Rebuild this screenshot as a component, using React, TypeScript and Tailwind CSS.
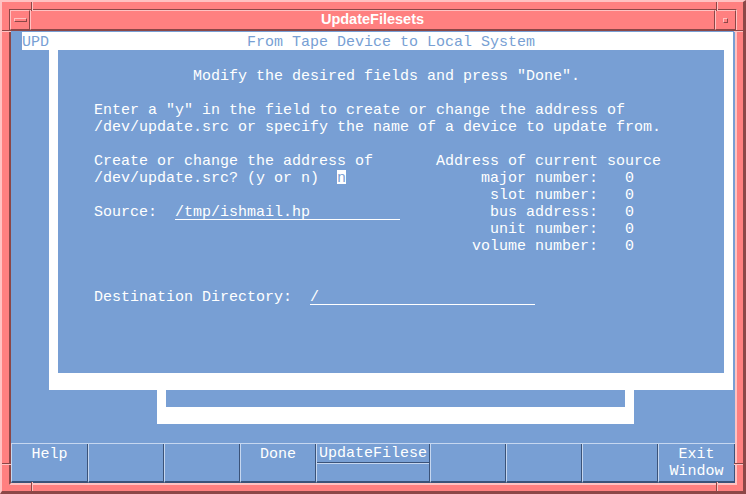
import React from "react";

const Line = ({ children }: { children?: React.ReactNode }) => (
  <div className="h-[17px] leading-[20px] whitespace-pre">{children}</div>
);

const Field = ({ text }: { text: string }) => (
  <span className="inline-block w-[225px] h-[17px] align-top border-b border-white">{text}</span>
);

const Btn = ({ w, lines, split }: { w: string; lines: string[]; split?: boolean }) => (
  <div
    className={`${w} h-full flex flex-col border-l border-l-[#c6d7f0] border-r border-r-[#3b5379] border-b-2 border-b-[#3b5379] text-white text-center`}
  >
    {split ? (
      <>
        <div className="h-[19px] border-b border-b-[#3b5379]">
          <div className="h-[17px] leading-[20px] whitespace-pre">{lines[0]}</div>
        </div>
        <div className="flex-1 border-t border-t-[#c6d7f0]" />
      </>
    ) : (
      <div className="pt-px">
        {lines.map((l, i) => (
          <div key={i} className="h-[17px] leading-[20px] whitespace-pre">
            {l}
          </div>
        ))}
      </div>
    )}
  </div>
);

export default function App() {
  return (
    <div className="w-[746px] h-[494px] relative overflow-hidden bg-[#ff8080] border-t-2 border-l-2 border-r-[3px] border-b-[3px] border-t-[#ffc2c2] border-l-[#ffc2c2] border-r-[#8c4747] border-b-[#8c4747] pl-[7px] pt-[7px] pr-[6px] pb-[6px]">
      {/* frame corner separators */}
      <div className="absolute left-[29px] top-0 w-px h-[9px] bg-[#8c4747]" />
      <div className="absolute left-[30px] top-0 w-px h-[9px] bg-[#ffc2c2]" />
      <div className="absolute left-[714px] top-0 w-px h-[9px] bg-[#8c4747]" />
      <div className="absolute left-[715px] top-0 w-px h-[9px] bg-[#ffc2c2]" />
      <div className="absolute left-[29px] bottom-0 w-px h-[9px] bg-[#8c4747]" />
      <div className="absolute left-[30px] bottom-0 w-px h-[9px] bg-[#ffc2c2]" />
      <div className="absolute left-[714px] bottom-0 w-px h-[9px] bg-[#8c4747]" />
      <div className="absolute left-[715px] bottom-0 w-px h-[9px] bg-[#ffc2c2]" />
      <div className="absolute left-0 top-[28px] w-[9px] h-px bg-[#8c4747]" />
      <div className="absolute left-0 top-[29px] w-[9px] h-px bg-[#ffc2c2]" />
      <div className="absolute right-0 top-[28px] w-[9px] h-px bg-[#8c4747]" />
      <div className="absolute right-0 top-[29px] w-[9px] h-px bg-[#ffc2c2]" />
      <div className="absolute left-0 top-[461px] w-[9px] h-px bg-[#8c4747]" />
      <div className="absolute left-0 top-[462px] w-[9px] h-px bg-[#ffc2c2]" />
      <div className="absolute right-0 top-[461px] w-[9px] h-px bg-[#8c4747]" />
      <div className="absolute right-0 top-[462px] w-[9px] h-px bg-[#ffc2c2]" />

      <div className="w-full h-full flex flex-col border border-t-[#8c4747] border-l-[#8c4747] border-r-[#ffc2c2] border-b-[#ffc2c2]">
        {/* title bar */}
        <div className="flex h-[20px] shrink-0">
          <div className="w-[20px] h-full border border-t-[#ffc2c2] border-l-[#ffc2c2] border-r-[#8c4747] border-b-[#8c4747] pl-[3px] pt-[7px]">
            <div className="w-[13px] h-[4px] border border-t-[#ffc2c2] border-l-[#ffc2c2] border-r-[#8c4747] border-b-[#8c4747]" />
          </div>
          <div className="flex-1 h-full border border-t-[#ffc2c2] border-l-[#ffc2c2] border-r-[#8c4747] border-b-[#8c4747] flex items-center justify-center text-white font-bold text-[14.5px] font-['Liberation_Sans',Arial,sans-serif]">
            UpdateFilesets
          </div>
          <div className="w-[21px] h-full border border-t-[#ffc2c2] border-l-[#ffc2c2] border-r-[#8c4747] border-b-[#8c4747] pl-[7px] pt-[7px]">
            <div className="w-[5px] h-[5px] border border-t-[#ffc2c2] border-l-[#ffc2c2] border-r-[#8c4747] border-b-[#8c4747]" />
          </div>
        </div>

        {/* client area */}
        <div className="flex-1 flex flex-col border border-t-[#8c4747] border-l-[#8c4747] border-r-[#ffc2c2] border-b-[#ffc2c2] bg-[#789fd4] font-['Liberation_Mono','Courier_New',monospace] text-[15px]">
          <div className="h-[412px] shrink-0 pt-px pl-[11px]">
            {/* header */}
            <div className="w-[711px] h-[18px] bg-white pt-px text-[#789fd4]">
              <Line>{"UPD                      From Tape Device to Local System"}</Line>
            </div>
            {/* main dialog */}
            <div className="ml-[27px] w-[684px] border-l-[9px] border-r-[9px] border-b-[17px] border-white text-white">
              <div className="h-[323px]">
                <Line />
                <Line>{'               Modify the desired fields and press "Done".'}</Line>
                <Line />
                <Line>{'    Enter a "y" in the field to create or change the address of'}</Line>
                <Line>{"    /dev/update.src or specify the name of a device to update from."}</Line>
                <Line />
                <Line>{"    Create or change the address of       Address of current source"}</Line>
                <Line>
                  {"    /dev/update.src? (y or n)  "}
                  <span className="inline-block w-[9px] h-[17px] align-top text-[#789fd4] bg-[linear-gradient(to_bottom,transparent_1px,white_1px,white_15px,transparent_15px)]">
                    n
                  </span>
                  {"               major number:   0"}
                </Line>
                <Line>{"                                                slot number:   0"}</Line>
                <Line>
                  {"    Source:  "}
                  <Field text="/tmp/ishmail.hp" />
                  {"          bus address:   0"}
                </Line>
                <Line>{"                                                unit number:   0"}</Line>
                <Line>{"                                              volume number:   0"}</Line>
                <Line />
                <Line />
                <Line>
                  {"    Destination Directory:  "}
                  <Field text="/" />
                </Line>
              </div>
            </div>
            {/* window behind */}
            <div className="ml-[135px] w-[477px] h-[34px] border-l-[9px] border-r-[9px] border-b-[17px] border-white" />
          </div>

          {/* function key bar */}
          <div className="flex-1 flex border-t border-t-[#c6d7f0]">
            <Btn w="w-[77px]" lines={["Help"]} />
            <Btn w="w-[76px]" lines={[]} />
            <Btn w="w-[76px]" lines={[]} />
            <Btn w="w-[76px]" lines={["Done"]} />
            <Btn w="w-[114px]" lines={["UpdateFilese"]} split />
            <Btn w="w-[76px]" lines={[]} />
            <Btn w="w-[76px]" lines={[]} />
            <Btn w="w-[76px]" lines={[]} />
            <Btn w="w-[77px]" lines={["Exit", "Window"]} />
          </div>
        </div>
      </div>
    </div>
  );
}
